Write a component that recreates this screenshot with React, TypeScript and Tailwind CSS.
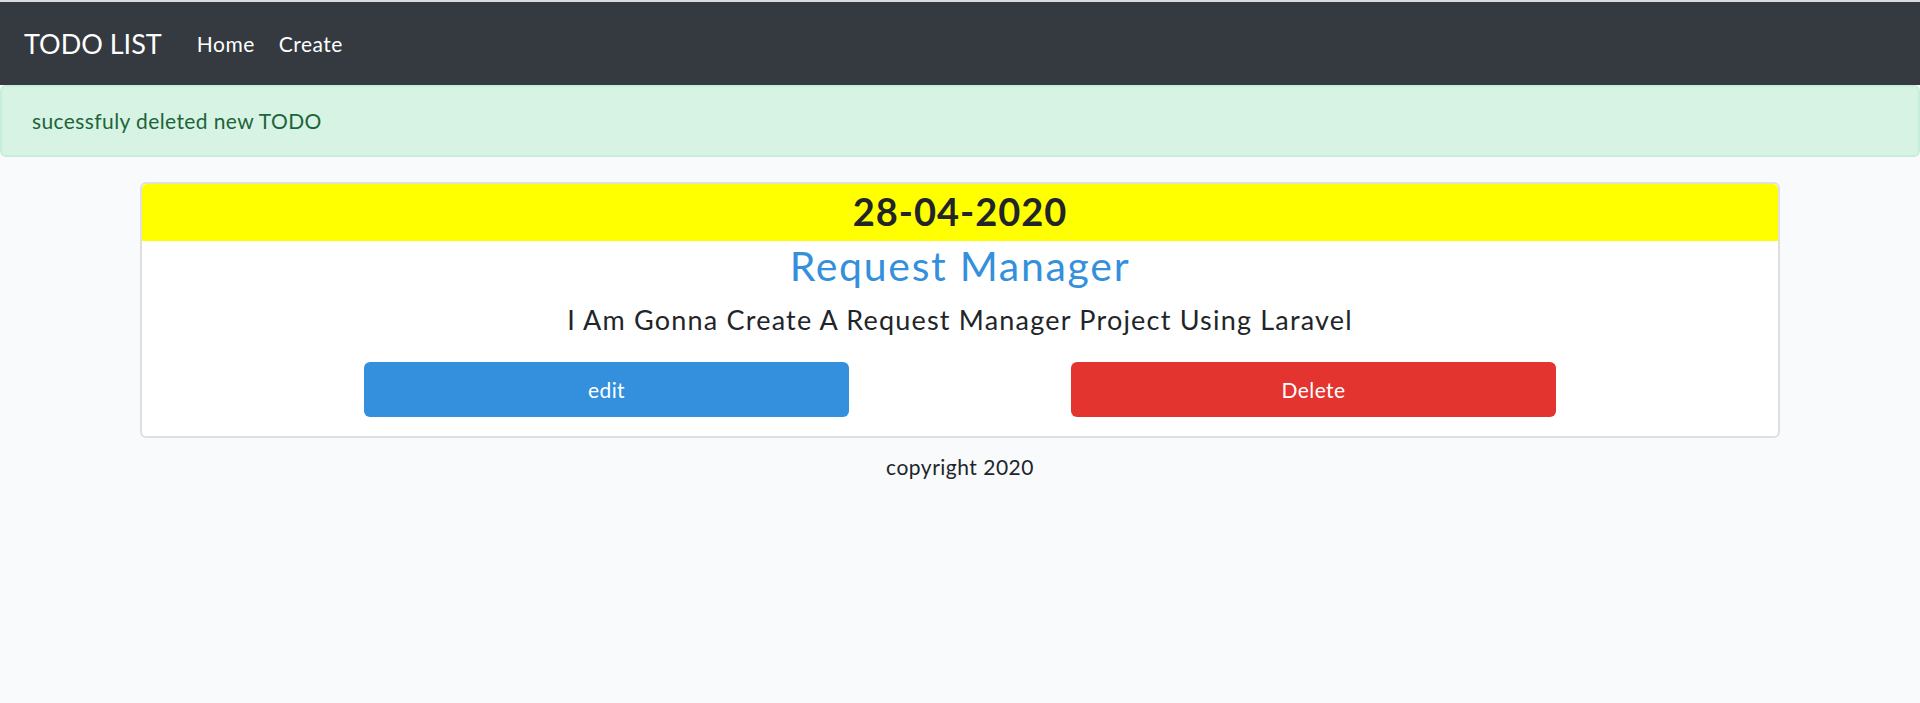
export default function App() {
  return (
    <div className="min-h-[703px] bg-[#f8fafc] font-['Lato',sans-serif] text-[#212529] border-t-2 border-[#dcdcdc]">
      <nav className="h-[83px] bg-[#343a40] flex items-center pl-[24px]">
        <span className="text-white text-[27px] leading-none mr-[35px]">TODO LIST</span>
        <a className="text-white text-[21px] leading-none tracking-[0.5px] mr-[24px]">Home</a>
        <a className="text-white text-[21px] leading-none tracking-[0.5px]">Create</a>
      </nav>

      <div className="h-[72px] bg-[#d7f3e3] border-2 border-[#c7eed8] rounded-[6px] flex items-center pl-[30px] text-[#1d643b] text-[21px] tracking-[0.4px]">
        sucessfuly deleted new TODO
      </div>

      <div className="pt-[25px]">
        <div className="mx-[140px] bg-white border-2 border-[#dfdfdf] rounded-[6px]">
          <div className="h-[57px] pb-[4px] bg-[#ffff00] rounded-t-[5px] flex items-center justify-center">
            <h2 className="text-[38px] font-bold leading-none tracking-[1px]">28-04-2020</h2>
          </div>
          <h1 className="h-[50px] leading-[50px] text-center text-[41px] tracking-[1.7px] text-[#3490dc]">Request Manager</h1>
          <h4 className="mt-[5px] h-[48px] leading-[48px] text-center text-[27px] tracking-[1.2px]">
            I Am Gonna Create A Request Manager Project Using Laravel
          </h4>
          <div className="mt-[18px] pb-[19px] flex justify-center gap-[222px]">
            <button className="w-[485px] h-[55px] rounded-[6px] bg-[#3490dc] text-white text-[21px] tracking-[0.4px]">edit</button>
            <button className="w-[485px] h-[55px] rounded-[6px] bg-[#e3342f] text-white text-[21px] tracking-[0.4px]">Delete</button>
          </div>
        </div>
        <p className="mt-[14px] h-[30px] leading-[30px] text-center text-[21px] tracking-[0.5px]">copyright 2020</p>
      </div>
    </div>
  );
}
